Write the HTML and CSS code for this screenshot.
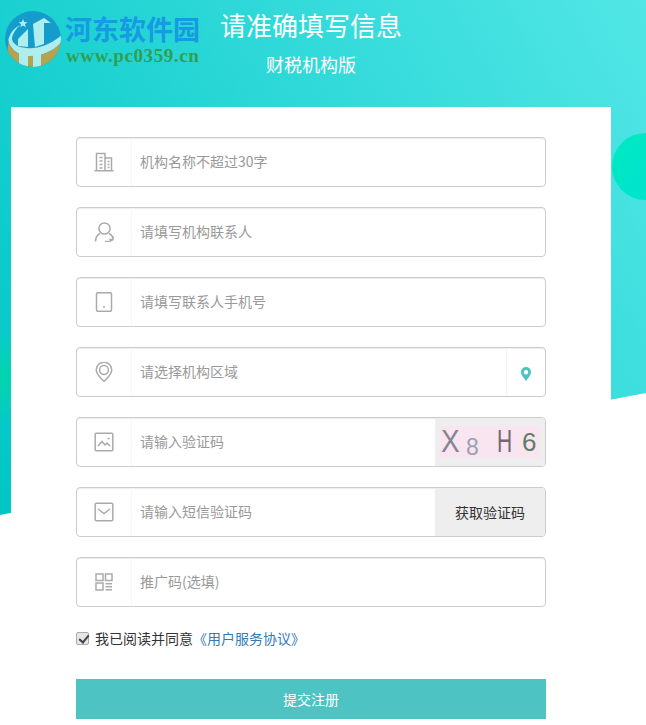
FILE: index.html
```html
<!DOCTYPE html>
<html lang="zh-CN">
<head>
<meta charset="utf-8">
<title>请准确填写信息</title>
<link rel="stylesheet" href="styles.css">
</head>
<body>
<div class="bg"><div class="blob"></div></div>
<div class="logo">
  <svg class="logo-mark" width="56" height="56" viewBox="0 0 56 56">
    <defs><clipPath id="disc"><circle cx="28" cy="28" r="28"/></clipPath></defs>
    <g clip-path="url(#disc)">
      <rect width="56" height="56" fill="#149dcc"/>
      <path d="M3.500 30C5 37 12 44 22 45C35 46 50 40 57 30L60 60L0 60Z" fill="#b3a24e"/>
      <rect x="14" y="40" width="9" height="18" fill="#aeeeee"/>
      <rect x="28" y="40" width="8" height="18" fill="#aeeeee"/>
      <path d="M3.300 29C5 22 9 17 15 14C10 19 7 24 7 28C8 35 18 38 28 37C40 36 50 30 56.500 24L57 30C50 40 35 46 22 45C12 44 5 37 3.300 29Z" fill="#aeeeee"/>
    </g>
    <path d="M13 28L23 18V36L13 35Z" fill="#aeeeee"/>
    <path d="M28 13L39 7L46 12L39 12V33L30 36Z" fill="#aeeeee"/>
    <path d="M18 8l1.300 3 3.200.2-2.500 2 .9 3-2.900-1.700-2.800 1.700.9-3-2.500-2 3.200-.2Z" fill="#aeeeee"/>
  </svg>
  <div class="logo-text">
    <div class="logo-name">河东软件园</div>
    <div class="logo-url">www.pc0359.cn</div>
  </div>
</div>
<main class="page">
  <header class="header">
    <h1 class="title">请准确填写信息</h1>
    <p class="subtitle">财税机构版</p>
  </header>
  <form class="card">
    <div class="field">
      <span class="field-icon">
        <svg class="ico" viewBox="0 0 20 20"><path d="M2.500 18.500V1.500H11V18.500M11 6H17.500V18.500M0.500 18.800H19.500M5.500 5.500H8.500M5.500 9H8.500M5.500 12.500H8.500M5.500 16H8.500M13.500 9.500H15.500M13.500 12.500H15.500M13.500 15.500H15.500"/></svg>
      </span>
      <span class="field-text">机构名称不超过30字</span>
    </div>
    <div class="field">
      <span class="field-icon">
        <svg class="ico" viewBox="0 0 20 20"><circle cx="10.500" cy="6.500" r="5.600"/><path d="M6 11.500C3 13 1.500 16 1.500 19.500M15 11.500C17 12.500 18.500 14 19 16M19.500 14.500L18.700 17.800L15.500 17.200M18.500 17.500C16.500 19.500 13.500 20 11 19.300"/></svg>
      </span>
      <span class="field-text">请填写机构联系人</span>
    </div>
    <div class="field">
      <span class="field-icon">
        <svg class="ico" viewBox="0 0 20 20"><rect x="2.500" y="0.700" width="15" height="18.600" rx="1.500"/><path d="M9 15H11"/></svg>
      </span>
      <span class="field-text">请填写联系人手机号</span>
    </div>
    <div class="field">
      <span class="field-icon">
        <svg class="ico" viewBox="0 0 20 20"><path d="M10 19.500C6 15 2.300 12.500 2.300 8A7.700 7.700 0 0 1 17.700 8C17.700 12.500 14 15 10 19.500Z"/><circle cx="10" cy="8" r="4.400"/></svg>
      </span>
      <span class="field-text">请选择机构区域</span>
      <span class="field-pin">
        <svg width="10" height="14" viewBox="0 0 10 14"><path fill-rule="evenodd" d="M5 14C3 11 0 8.500 0 5A5 5 0 0 1 10 5C10 8.500 7 11 5 14ZM5 3A2.200 2.200 0 1 0 5 7.400A2.200 2.200 0 0 0 5 3Z" fill="#4dc3c3"/></svg>
      </span>
    </div>
    <div class="field">
      <span class="field-icon">
        <svg class="ico" viewBox="0 0 20 20"><rect x="1.200" y="1.200" width="17.600" height="17.600" rx="1"/><path d="M4 14L8 9.500L11 13L13 11L16 14M13.500 6.500H15.500"/></svg>
      </span>
      <span class="field-text">请输入验证码</span>
      <span class="field-addon">
        <span class="captcha"><span class="c1">X</span><span class="c2">8</span><span class="c3">H</span><span class="c4">6</span></span>
      </span>
    </div>
    <div class="field">
      <span class="field-icon">
        <svg class="ico" viewBox="0 0 20 20"><rect x="1.200" y="1.200" width="17.600" height="17.600" rx="1"/><path d="M4 7L10 11.500L16 7"/></svg>
      </span>
      <span class="field-text">请输入短信验证码</span>
      <span class="field-addon field-addon-text">获取验证码</span>
    </div>
    <div class="field">
      <span class="field-icon">
        <svg class="ico" viewBox="0 0 20 20"><path d="M2 2H9V8.500H2ZM11.500 2H18V8.500H11.500ZM2 11H9V18H2ZM11.500 11.700H18M11.500 14.700H18M11.500 17.700H18"/></svg>
      </span>
      <span class="field-text">推广码(选填)</span>
    </div>
    <label class="agree">
      <input class="agree-box" type="checkbox" checked>
      <span>我已阅读并同意<a class="agree-link" href="#">《用户服务协议》</a></span>
    </label>
    <button class="submit" type="button">提交注册</button>
  </form>
</main>
</body>
</html>
```

FILE: styles.css
```css
* { box-sizing: border-box; }

html, body {
  margin: 0;
  height: 725px;
  overflow: hidden;
  background: #fff;
  font-family: "Noto Sans CJK SC", "Liberation Sans", sans-serif;
}

.bg {
  position: absolute;
  left: 0;
  top: 0;
  width: 646px;
  height: 516px;
  background:
    radial-gradient(circle 45px at 0 378px, rgba(0, 214, 170, 0.95), rgba(0, 214, 170, 0)),
    linear-gradient(60deg, #00c6c6 0%, #52e6e6 100%);
  clip-path: polygon(0 0, 100% 0, 100% 393px, 0 515px);
  overflow: hidden;
}

.blob {
  position: absolute;
  left: 612px;
  top: 133px;
  width: 67px;
  height: 67px;
  border-radius: 50%;
  background: linear-gradient(135deg, #00e9c0, #00e2d2);
}

.logo {
  position: absolute;
  left: 5px;
  top: 11px;
  display: flex;
  gap: 4px;
}

.logo-mark { flex: none; }

.logo-text {
  display: flex;
  flex-direction: column;
}

.logo-name {
  font-size: 27px;
  font-weight: 700;
  line-height: 35px;
  color: #169ae2;
}

.logo-url {
  padding-left: 1px;
  font-family: "Liberation Serif", serif;
  font-size: 19px;
  font-weight: 700;
  line-height: 20px;
  letter-spacing: 0.6px;
  white-space: nowrap;
  color: #2f9f55;
}

.page {
  position: relative;
  width: 600px;
  margin-left: 11px;
}

.header {
  height: 107px;
  padding-top: 5px;
  text-align: center;
  color: #fff;
}

.title {
  margin: 0;
  font-size: 26px;
  font-weight: 400;
  line-height: 40px;
}

.subtitle {
  margin: 9px 0 0;
  font-size: 18px;
  line-height: 20px;
}

.card {
  display: flex;
  flex-direction: column;
  align-items: stretch;
  gap: 20px;
  height: 618px;
  padding: 30px 65px 0;
  background: #fff;
}

.field {
  display: flex;
  align-items: stretch;
  height: 50px;
  border: 1px solid #ccc;
  border-radius: 4px;
  box-shadow: inset 0 1px 1px rgba(0, 0, 0, 0.075);
  font-size: 14px;
  color: #999;
}

.field-icon {
  flex: none;
  display: flex;
  align-items: center;
  justify-content: center;
  width: 55px;
  border-right: 1px solid #f7f7f7;
}

.ico {
  width: 20px;
  height: 20px;
  fill: none;
  stroke: #aaa;
  stroke-width: 1.5;
}

.field-text {
  flex: 1;
  padding-left: 8px;
  line-height: 46px;
}

.field-pin {
  flex: none;
  display: flex;
  align-items: center;
  justify-content: center;
  width: 39px;
  padding-top: 4px;
  border-left: 1px solid #f5f5f5;
}

.field-addon {
  flex: none;
  display: flex;
  align-items: center;
  justify-content: center;
  width: 110px;
  border-radius: 0 3px 3px 0;
  background: #eee;
  color: #333;
}

.captcha {
  display: grid;
  grid-template-columns: 25px 31px 25px 18px;
  align-items: center;
  width: 100px;
  height: 32px;
  padding-left: 1px;
  background: #f8e5ef;
  font-family: "Liberation Sans", sans-serif;
  font-size: 28px;
  line-height: 32px;
}

.c1 { color: #85858f; transform: scaleY(1.1); }
.c2 { color: #9aa0b4; font-size: 23px; transform: translateY(5px); }
.c3 { color: #75686f; transform: scale(0.75, 1.1); transform-origin: left center; }
.c4 { color: #5f7d68; font-size: 26px; }

.agree {
  display: flex;
  align-items: center;
  height: 20px;
  margin-top: 1px;
  font-size: 14px;
  color: #333;
}

.agree-box {
  appearance: none;
  position: relative;
  flex: none;
  width: 13px;
  height: 13px;
  margin: 0 6px 0 0;
  border: 1px solid #aaa;
  border-radius: 2px;
  background: #e6e6e6;
}

.agree-box:checked::after {
  content: "";
  position: absolute;
  left: 3.5px;
  top: 0.5px;
  width: 4px;
  height: 8px;
  border: solid #444;
  border-width: 0 2px 2px 0;
  transform: rotate(40deg);
}

.agree-link {
  color: #337ab7;
  text-decoration: none;
}

.submit {
  height: 40px;
  margin-top: 11px;
  border: 0;
  background: #4dc3c3;
  color: #fff;
  font: inherit;
  font-size: 14px;
}
```
